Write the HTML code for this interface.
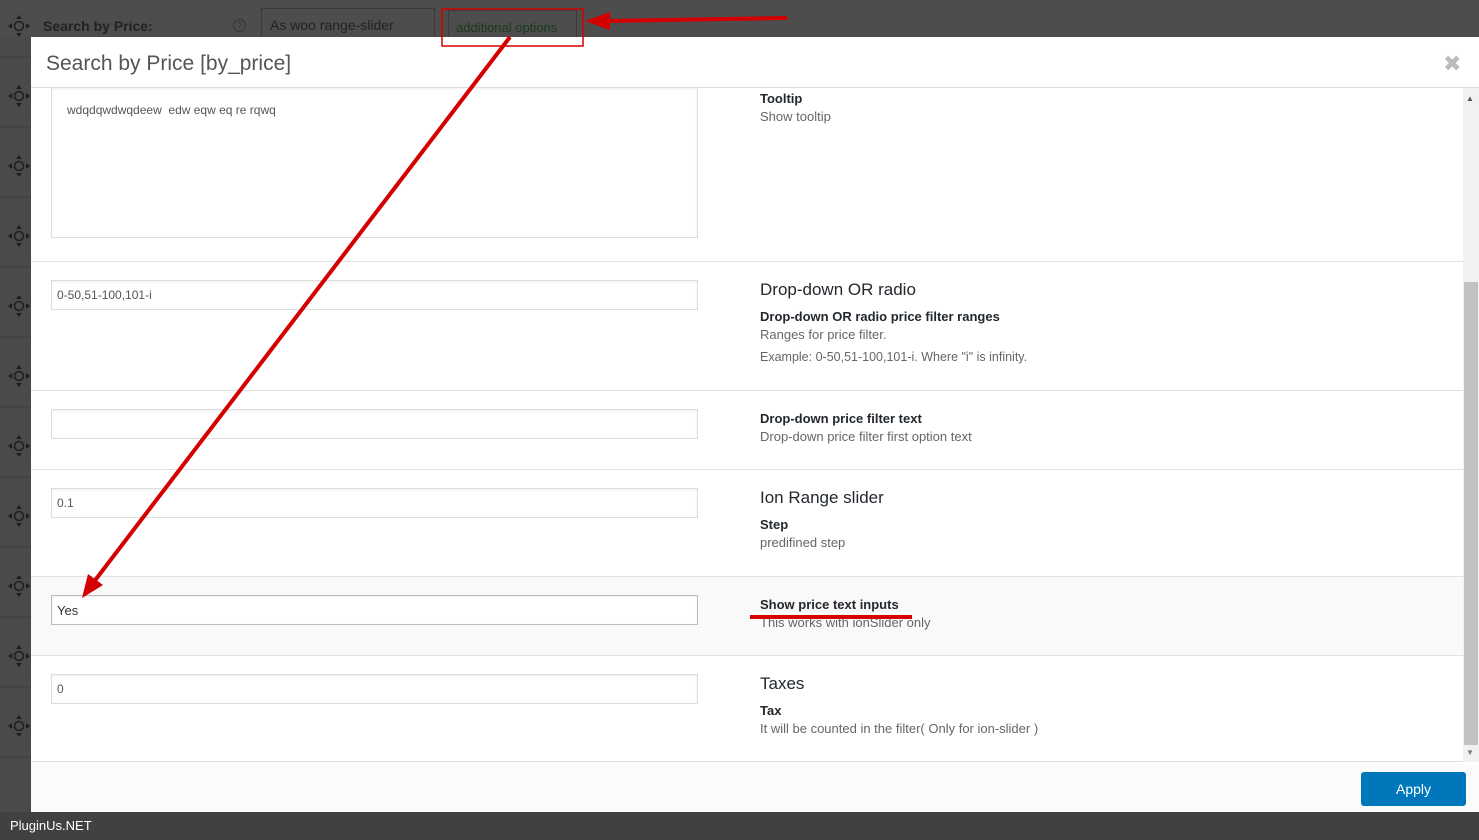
<!DOCTYPE html>
<html><head><style>
*{margin:0;padding:0;box-sizing:border-box}
body{width:1479px;height:840px;background:#4a4a4a;font-family:"Liberation Sans",sans-serif;position:relative;overflow:hidden;font-size:13px;color:#444}
.abs{position:absolute}
.row{position:absolute;left:31px;width:1432px;border-bottom:1px solid #e1e1e1;background:#fff}
.inp{position:absolute;left:20px;width:647px;height:30px;border:1px solid #ddd;background:#fff;padding:7px 5px;font-size:12px;color:#555;box-shadow:inset 0 1px 2px rgba(0,0,0,.07)}
.r{position:absolute;left:729px}
.h{font-size:17px;color:#23282d;margin-bottom:9px}
.b{font-weight:bold;font-size:13px;color:#23282d;margin-bottom:3px}
.d{font-size:13px;color:#666;margin-bottom:4px}
</style></head><body>
<div class="abs" style="left:0;top:0;width:1479px;height:37px;background:#4d4d4d"></div>
<div class="abs" style="left:43px;top:18px;font-weight:bold;color:#222;font-size:14px">Search by Price:</div>
<div class="abs" style="left:233px;top:19px;width:13px;height:13px;border:1px solid #333;border-radius:50%;font-size:9px;text-align:center;color:#333">?</div>
<div class="abs" style="left:261px;top:8px;width:174px;height:32px;border:1px solid #3a3a3a;background:#4d4d4d;color:#222;padding:8px;font-size:14px">As woo range-slider</div>
<div class="abs" style="left:448px;top:10px;width:129px;height:32px;border:1px solid #3a3a3a;background:#4d4d4d;color:#1a3a1a;padding:9px 7px;font-size:13px">additional options</div>
<svg class="abs" style="left:0;top:0" width="40" height="812">
<g fill="#1e1e1e">
<g id="m"><circle cx="19" cy="26" r="4.5" fill="none" stroke="#1e1e1e" stroke-width="1.5"/><path d="M19 15l-3 4h6zM19 37l-3-4h6zM8 26l4-3v6zM30 26l-4-3v6z"/></g>
<use href="#m" y="70"/><use href="#m" y="140"/><use href="#m" y="210"/><use href="#m" y="280"/><use href="#m" y="350"/><use href="#m" y="420"/><use href="#m" y="490"/><use href="#m" y="560"/><use href="#m" y="630"/><use href="#m" y="700"/>
</g>
<g stroke="#3c3c3c"><line x1="0" y1="57" x2="31" y2="57"/><line x1="0" y1="127" x2="31" y2="127"/><line x1="0" y1="197" x2="31" y2="197"/><line x1="0" y1="267" x2="31" y2="267"/><line x1="0" y1="337" x2="31" y2="337"/><line x1="0" y1="407" x2="31" y2="407"/><line x1="0" y1="477" x2="31" y2="477"/><line x1="0" y1="547" x2="31" y2="547"/><line x1="0" y1="617" x2="31" y2="617"/><line x1="0" y1="687" x2="31" y2="687"/><line x1="0" y1="757" x2="31" y2="757"/></g>
</svg>
<div class="abs" style="left:31px;top:37px;width:1448px;height:775px;background:#fff"></div>
<div class="abs" style="left:31px;top:37px;width:1448px;height:51px;border-bottom:1px solid #ddd;background:#fff"></div>
<div class="abs" style="left:46px;top:52px;font-size:21px;color:#555">Search by Price [by_price]</div>
<div class="abs" style="left:1443px;top:51px;font-size:22px;color:#bbb">✖</div>
<div class="row" style="top:88px;height:174px">
<div class="inp" style="top:0;height:150px;padding:15px;border-top:none;font-size:12px">wdqdqwdwqdeew&nbsp; edw eqw eq re rqwq</div>
<div class="r" style="top:3px"><div class="b">Tooltip</div><div class="d">Show tooltip</div></div></div>
<div class="row" style="top:262px;height:129px">
<div class="inp" style="top:18px">0-50,51-100,101-i</div>
<div class="r" style="top:18px"><div class="h">Drop-down OR radio</div><div class="b">Drop-down OR radio price filter ranges</div><div class="d">Ranges for price filter.</div><div class="d" style="font-size:12.5px;margin-top:8px">Example: 0-50,51-100,101-i. Where "i" is infinity.</div></div></div>
<div class="row" style="top:391px;height:79px">
<div class="inp" style="top:18px"></div>
<div class="r" style="top:20px"><div class="b">Drop-down price filter text</div><div class="d">Drop-down price filter first option text</div></div></div>
<div class="row" style="top:470px;height:107px">
<div class="inp" style="top:18px">0.1</div>
<div class="r" style="top:18px"><div class="h">Ion Range slider</div><div class="b">Step</div><div class="d">predifined step</div></div></div>
<div class="row" style="top:577px;height:79px;background:#f9f9f9">
<div class="inp" style="top:18px;border-color:#bbb;font-size:13px;color:#333">Yes</div>
<div class="r" style="top:20px"><div class="b">Show price text inputs</div><div class="d">This works with ionSlider only</div></div></div>
<div class="row" style="top:656px;height:106px;border-bottom:1px solid #ddd">
<div class="inp" style="top:18px">0</div>
<div class="r" style="top:18px"><div class="h">Taxes</div><div class="b">Tax</div><div class="d">It will be counted in the filter( Only for ion-slider )</div></div></div>
<div class="abs" style="left:1463px;top:88px;width:16px;height:674px;background:#f1f1f1"></div>
<div class="abs" style="left:1464px;top:282px;width:14px;height:463px;background:#c1c1c1"></div>
<div class="abs" style="left:1466px;top:94px;font-size:8px;color:#555">▲</div>
<div class="abs" style="left:1466px;top:748px;font-size:8px;color:#777">▼</div>
<div class="abs" style="left:31px;top:763px;width:1448px;height:49px;background:#fcfcfc"></div>
<div class="abs" style="left:1361px;top:772px;width:105px;height:34px;background:#0077bb;border-radius:3px;color:#fff;font-size:14px;text-align:center;line-height:34px">Apply</div>
<div class="abs" style="left:0;top:812px;width:1479px;height:28px;background:#414141;color:#fff;font-size:13px;padding:6px 10px">PluginUs.NET</div>
<svg class="abs" style="left:0;top:0" width="1479" height="840">
<rect x="442" y="9" width="141" height="37" fill="none" stroke="#d40000" stroke-width="1.5"/>
<line x1="787" y1="18" x2="605" y2="21" stroke="#d40000" stroke-width="4"/>
<path d="M585 21L610 12L610 30Z" fill="#d40000"/>
<line x1="510" y1="37" x2="93" y2="583" stroke="#d40000" stroke-width="4"/>
<path d="M82 598L88 574L103 585Z" fill="#d40000"/>
<line x1="750" y1="617" x2="912" y2="617" stroke="#d40000" stroke-width="4"/>
</svg>
</body></html>
